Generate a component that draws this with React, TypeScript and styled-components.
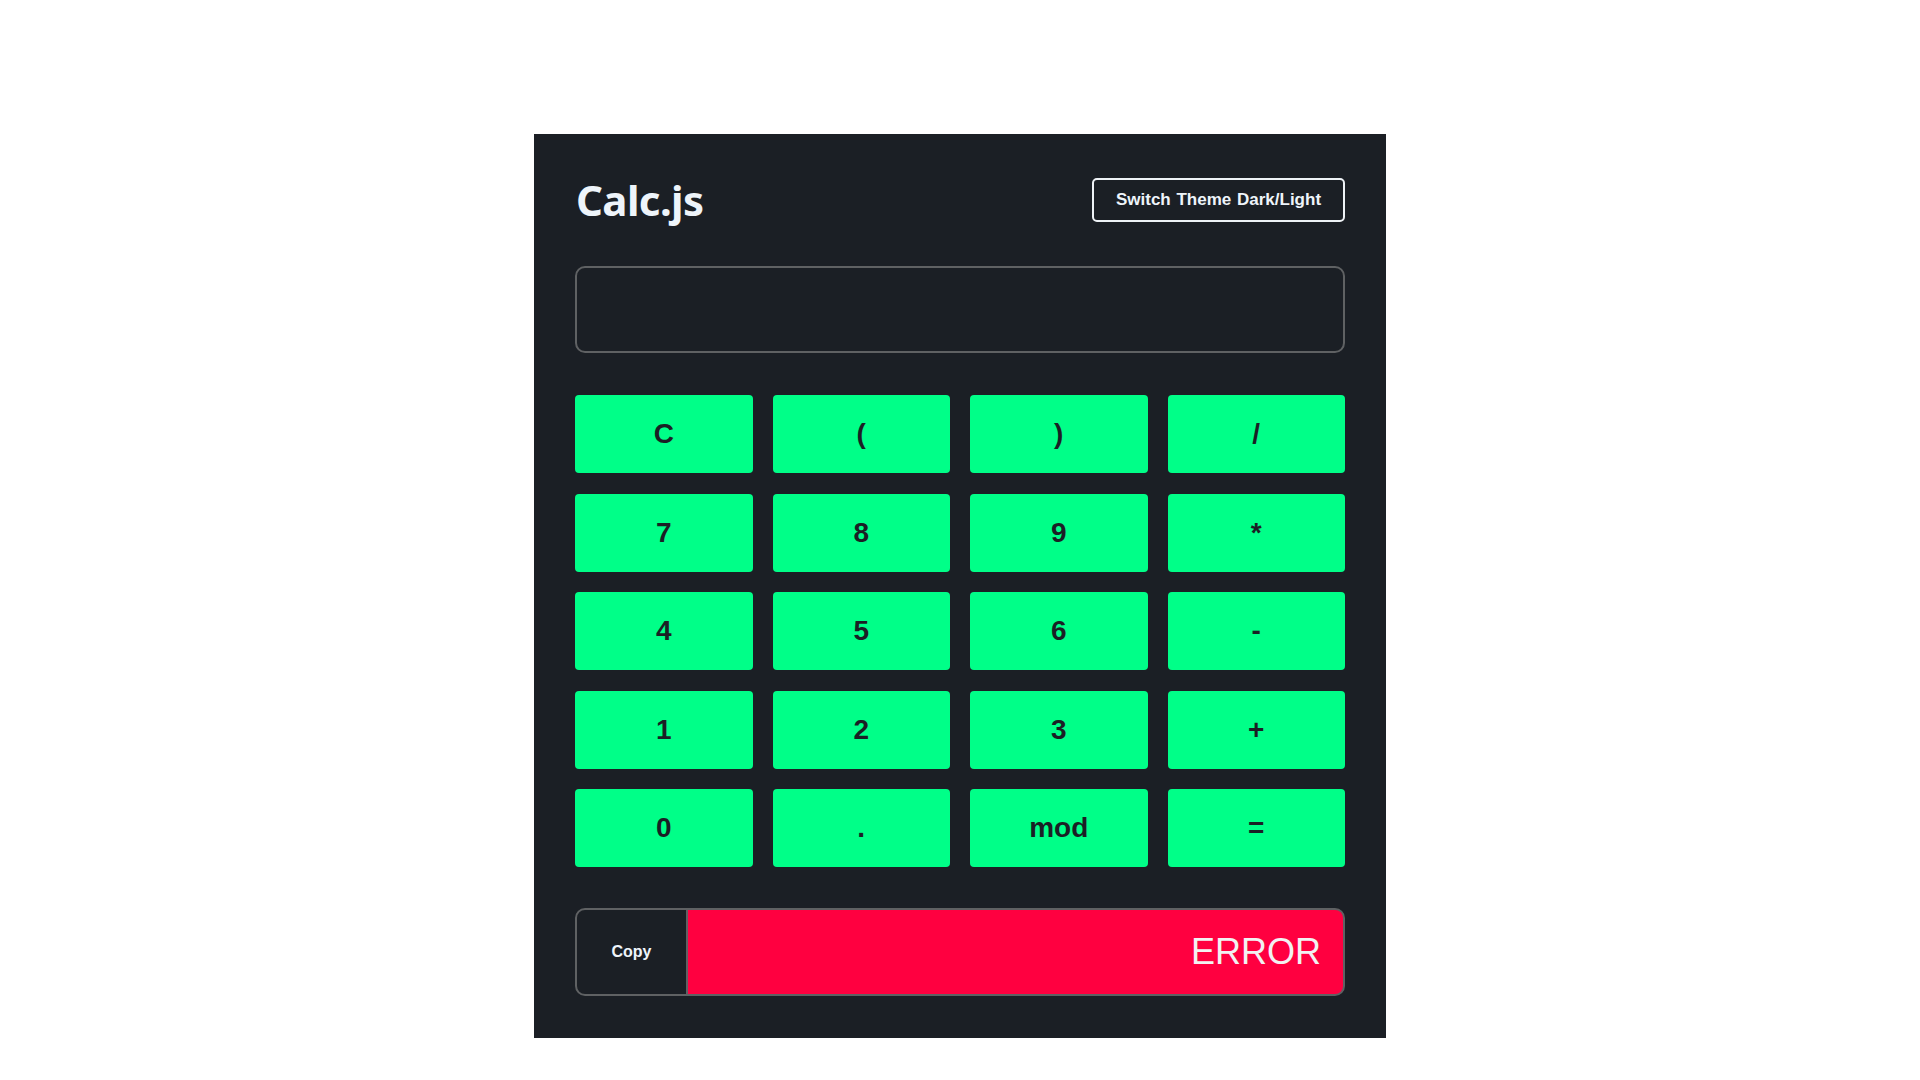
import styled, { createGlobalStyle } from 'styled-components';

const panelBg = '#1b1f25';
const keyGreen = '#00ff88';
const errorRed = '#ff0040';
const edgeGrey = '#5f6163';

const GlobalStyle = createGlobalStyle`
  html, body {
    margin: 0;
    padding: 0;
    background: #ffffff;
  }
  body {
    font-family: 'Liberation Sans', Arial, sans-serif;
  }
`;

const Page = styled.div`
  display: flex;
  justify-content: center;
  padding-top: 134px;
`;

const Panel = styled.div`
  width: 852px;
  box-sizing: border-box;
  background: ${panelBg};
  padding: 44px 41px 42px 41px;
  display: flex;
  flex-direction: column;
`;

const Header = styled.div`
  height: 44px;
  display: flex;
  align-items: center;
  justify-content: space-between;
`;

const Title = styled.h1`
  margin: 0;
  font-family: 'Noto Sans', 'Open Sans', sans-serif;
  font-weight: 700;
  font-size: 42px;
  letter-spacing: -0.6px;
  color: #eef4fa;
  line-height: 1;
  padding-left: 1px;
`;

const ThemeButton = styled.button`
  width: 253px;
  height: 44px;
  box-sizing: border-box;
  background: transparent;
  border: 2px solid #eef2f6;
  border-radius: 5px;
  color: #eef4fa;
  font-family: 'Liberation Sans', Arial, sans-serif;
  font-weight: 700;
  font-size: 17px;
  word-spacing: 1px;
  cursor: pointer;
`;

const Display = styled.input`
  margin-top: 44px;
  height: 87px;
  box-sizing: border-box;
  width: 100%;
  background: ${panelBg};
  border: 2px solid ${edgeGrey};
  border-radius: 10px;
  color: #eef4fa;
  font-size: 32px;
  padding: 0 20px;
  outline: none;
`;

const Keypad = styled.div`
  margin-top: 42px;
  display: grid;
  grid-template-columns: repeat(4, 1fr);
  grid-auto-rows: 78px;
  column-gap: 20px;
  row-gap: 20.5px;
`;

const Key = styled.button`
  background: ${keyGreen};
  border: none;
  border-radius: 4px;
  color: #1b1f25;
  font-family: 'Liberation Sans', Arial, sans-serif;
  font-weight: 700;
  font-size: 28px;
  cursor: pointer;
`;

const ResultRow = styled.div`
  margin-top: 41px;
  height: 88px;
  display: flex;
`;

const CopyButton = styled.button`
  width: 113px;
  box-sizing: border-box;
  background: ${panelBg};
  border: 2px solid ${edgeGrey};
  border-radius: 10px 0 0 10px;
  color: #eef4fa;
  font-family: 'Liberation Sans', Arial, sans-serif;
  font-weight: 700;
  font-size: 16px;
  cursor: pointer;
`;

const Result = styled.div`
  flex: 1;
  box-sizing: border-box;
  background: ${errorRed};
  border: 2px solid ${edgeGrey};
  border-left: none;
  border-radius: 0 10px 10px 0;
  display: flex;
  align-items: center;
  justify-content: flex-end;
  padding-right: 22px;
  color: #f2f2f2;
  font-family: 'Liberation Sans', Arial, sans-serif;
  font-size: 36px;
`;

const keys = [
  'C', '(', ')', '/',
  '7', '8', '9', '*',
  '4', '5', '6', '-',
  '1', '2', '3', '+',
  '0', '.', 'mod', '=',
];

function App() {
  return (
    <>
      <GlobalStyle />
      <Page>
        <Panel>
          <Header>
            <Title>Calc.js</Title>
            <ThemeButton>Switch Theme Dark/Light</ThemeButton>
          </Header>
          <Display type="text" />
          <Keypad>
            {keys.map((k) => (
              <Key key={k}>{k}</Key>
            ))}
          </Keypad>
          <ResultRow>
            <CopyButton>Copy</CopyButton>
            <Result>ERROR</Result>
          </ResultRow>
        </Panel>
      </Page>
    </>
  );
}

export default App;
